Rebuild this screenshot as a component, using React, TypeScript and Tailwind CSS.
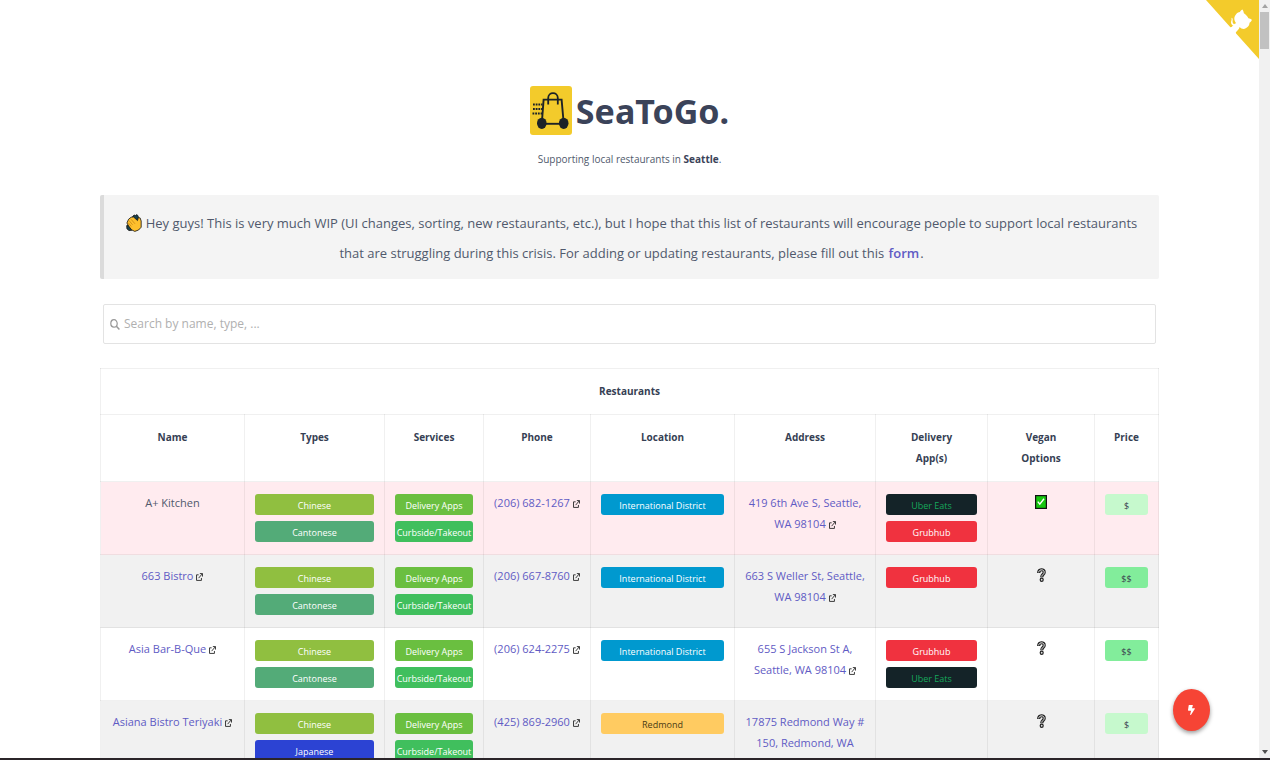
import React from "react";
import { FaBolt } from "react-icons/fa";

type Restaurant = {
  name: string;
  site?: boolean;
  types: string[];
  services: string[];
  phone: string;
  location: string;
  address: string;
  apps: string[];
  vegan: boolean | null;
  price: string;
  closed?: boolean;
};

const TAG_COLORS: Record<string, string> = {
  Chinese: "bg-[#90bf40] text-white",
  Cantonese: "bg-[#53ab78] text-white",
  Japanese: "bg-[#2c43d3] text-white",
  "Delivery Apps": "bg-[#6abf40] text-white",
  "Curbside/Takeout": "bg-[#40bf5d] text-white",
  "International District": "bg-[#0099cf] text-white",
  Redmond: "bg-[#ffcb61] text-[#4a3b14]",
  "Uber Eats": "bg-[#142328] text-[#16a75c]",
  Grubhub: "bg-[#f0323f] text-white",
  $: "bg-[#c6f9cd] text-[#3b4351]",
  $$: "bg-[#82ed9b] text-[#3b4351]",
};

const SERVICES = ["Delivery Apps", "Curbside/Takeout"];

const RESTAURANTS: Restaurant[] = [
  {
    name: "A+ Kitchen",
    types: ["Chinese", "Cantonese"],
    services: SERVICES,
    phone: "(206) 682-1267",
    location: "International District",
    address: "419 6th Ave S, Seattle, WA 98104",
    apps: ["Uber Eats", "Grubhub"],
    vegan: true,
    price: "$",
    closed: true,
  },
  {
    name: "663 Bistro",
    site: true,
    types: ["Chinese", "Cantonese"],
    services: SERVICES,
    phone: "(206) 667-8760",
    location: "International District",
    address: "663 S Weller St, Seattle, WA 98104",
    apps: ["Grubhub"],
    vegan: null,
    price: "$$",
  },
  {
    name: "Asia Bar-B-Que",
    site: true,
    types: ["Chinese", "Cantonese"],
    services: SERVICES,
    phone: "(206) 624-2275",
    location: "International District",
    address: "655 S Jackson St A, Seattle, WA 98104",
    apps: ["Grubhub", "Uber Eats"],
    vegan: null,
    price: "$$",
  },
  {
    name: "Asiana Bistro Teriyaki",
    site: true,
    types: ["Chinese", "Japanese"],
    services: SERVICES,
    phone: "(425) 869-2960",
    location: "Redmond",
    address: "17875 Redmond Way # 150, Redmond, WA 98052",
    apps: [],
    vegan: null,
    price: "$",
  },
];

const COLUMNS = [
  { label: "Name", width: "w-[144px]" },
  { label: "Types", width: "w-[140px]" },
  { label: "Services", width: "w-[99px]" },
  { label: "Phone", width: "w-[107px]" },
  { label: "Location", width: "w-[144px]" },
  { label: "Address", width: "w-[141px]" },
  { label: "Delivery\nApp(s)", width: "w-[112px]" },
  { label: "Vegan\nOptions", width: "w-[107px]" },
  { label: "Price", width: "w-[64px]" },
];

const Logo = () => (
  <svg viewBox="0 0 42 49" className="h-[49px] w-[42px] shrink-0" fill="none" stroke="#1d2327">
    <rect width="42" height="49" rx="3" fill="#f3cb2b" stroke="none" />
    <path d="M11.9 36 13.6 13.6H31.6L33.6 36" strokeWidth="1.9" />
    <path d="M18.2 18.5V12c0-6.5 9.6-6.5 9.6 0v6.5" strokeWidth="1.8" />
    <path d="M12 37.8H34" strokeWidth="1.9" />
    <path d="M3 18.5H12.5M3 23H12.5M2.5 27.5H12" strokeWidth="2" strokeDasharray="1.8 .9" />
    <ellipse cx="11.8" cy="37.3" rx="4.8" ry="5.6" fill="#1d2327" stroke="none" />
    <ellipse cx="33.7" cy="37.3" rx="4.8" ry="5.6" fill="#1d2327" stroke="none" />
  </svg>
);

const GithubCorner = () => (
  <a href="#github" aria-label="View source on GitHub" className="absolute top-0 right-0">
    <svg viewBox="0 0 250 250" preserveAspectRatio="none" className="h-[59px] w-[53px]" fill="#fff">
      <path fill="#f3cb2b" d="M0,0 L115,115 L130,115 L142,142 L250,250 L250,0 Z" />
      <path d="M128.3,109.0 C113.8,99.7 119.0,89.6 119.0,89.6 C122.0,82.7 120.5,78.6 120.5,78.6 C119.2,72.0 123.4,76.3 123.4,76.3 C127.3,80.9 125.5,87.3 125.5,87.3 C122.9,97.6 130.6,101.9 134.4,103.2" />
      <path d="M115.0,115.0 C114.9,115.1 118.7,116.5 119.8,115.4 L133.7,101.6 C136.9,99.2 139.9,98.4 142.2,98.6 C133.8,88.0 127.5,74.4 143.8,58.0 C148.5,53.4 154.0,51.2 159.7,51.0 C160.3,49.4 163.2,43.6 171.4,40.1 C171.4,40.1 176.1,42.5 178.8,56.2 C183.1,58.6 187.2,61.8 190.9,65.4 C194.5,69.0 197.7,73.2 200.1,77.6 C213.8,80.2 216.3,84.9 216.3,84.9 C212.7,93.1 206.9,96.0 205.4,96.6 C205.1,102.4 203.0,107.8 198.3,112.5 C181.9,128.9 168.3,122.5 157.7,114.1 C157.9,116.9 156.7,120.9 152.7,124.9 L141.0,136.5 C139.8,137.7 141.6,141.9 141.8,141.8 Z" />
    </svg>
  </a>
);

const ClapIcon = () => (
  <svg viewBox="0 0 16 18" className="mr-1 inline-block h-[18px] w-4 align-[-4px]" strokeLinejoin="round">
    <path d="M6.5 3 8 1l1.5.5L11 .6l1.2 1.6.4 2.6-2 2zM3 10.5.7 11.6l.2 3.2L3 16.6l3-.4z" fill="#17414d" stroke="#111" strokeWidth=".8" />
    <path d="M.9 9 2.6 5.2 5.2 3.2 7.6 3l3.9 3.6.8-3 1.8.3L15.2 7v6.2L12.6 16l-3.8 1.4-3.2-1.6L2.6 12z" fill="#fdbf2d" stroke="#111" strokeWidth=".8" />
    <path d="m3 6.6 3.6 4.2M5 5.2l4 4.6M2.2 8.8l3.2 3.6" stroke="#b8740f" strokeWidth=".6" fill="none" />
  </svg>
);

const SearchIcon = () => (
  <svg viewBox="0 0 10 11" className="h-[11px] w-[10px] shrink-0" fill="none" stroke="#999" aria-hidden="true">
    <ellipse cx="4" cy="4.4" rx="3.2" ry="3.7" strokeWidth="1.2" />
    <path d="m6.4 7.2 3 3.2" strokeWidth="1.5" />
  </svg>
);

const ExternalIcon = () => (
  <svg viewBox="0 0 8 9" className="ml-[3px] inline-block h-2 w-[7px] align-[-1px]" fill="none" stroke="#222">
    <path d="M3 2H.6v6.4h5.6V5.6" />
    <path d="M4.4.6h3v3.4M7.2.8 3 5.8" />
  </svg>
);

const VeganIcon = ({ value }: { value: boolean | null }) =>
  value ? (
    <svg viewBox="0 0 12 14" className="mx-auto h-[14px] w-3" role="img" aria-label="Yes">
      <rect x=".6" y=".6" width="10.8" height="12.8" fill="#17c60f" stroke="#111" strokeWidth="1.2" />
      <path d="m2.8 6.6 2 2.6 4.2-5.4" fill="none" stroke="#fff" strokeWidth="1.4" />
    </svg>
  ) : (
    <svg viewBox="0 0 9 14" className="mx-auto h-[14px] w-[9px]" role="img" aria-label="Unknown" fill="none">
      <path d="M1.7 5C1.6.8 7.2.8 7.2 4.2 7.2 6.6 4.8 6.4 4.8 9.2" stroke="#222" strokeWidth="3.2" />
      <path d="M1.7 4.4C1.8 1 7.2 1 7.2 4.2 7.2 6.6 4.8 6.4 4.8 8.6" stroke="#eee" strokeWidth="1" />
      <ellipse cx="4.7" cy="11.8" rx="1.5" ry="1.6" fill="#ddd" stroke="#222" strokeWidth="1.2" />
    </svg>
  );

const Tags = ({ items }: { items: string[] }) => (
  <div className="flex flex-col gap-[6px]">
    {items.map((item) => (
      <span
        key={item}
        className={`block h-[21px] rounded-[3px] text-[9px] leading-[23px] whitespace-nowrap ${TAG_COLORS[item]}`}
      >
        {item}
      </span>
    ))}
  </div>
);

const TextLink = ({ href, children }: { href: string; children: React.ReactNode }) => (
  <>
    <a href={href} className="font-medium text-[#5f5bc4] hover:underline">
      {children}
    </a>
    <ExternalIcon />
  </>
);

const rowColor = (item: Restaurant, index: number) => {
  if (item.closed) return "bg-[#ffebef]";
  return index % 2 ? "bg-[#f1f1f1]" : "bg-white";
};

const RestaurantTable = () => (
  <table className="mt-6 w-full table-fixed border-collapse text-center text-[11px] leading-[21px]">
    <colgroup>
      {COLUMNS.map((col) => (
        <col key={col.label} className={col.width} />
      ))}
    </colgroup>
    <thead className="text-[10px] text-[#363f54]">
      <tr>
        <th colSpan={COLUMNS.length} className="border border-black/6 py-3 font-bold">
          Restaurants
        </th>
      </tr>
      <tr>
        {COLUMNS.map((col) => (
          <th key={col.label} className="border border-black/6 px-3 py-3 align-top font-bold whitespace-pre-line">
            {col.label}
          </th>
        ))}
      </tr>
    </thead>
    <tbody>
      {RESTAURANTS.map((item, index) => (
        <tr key={item.name} className={`${rowColor(item, index)} *:border *:border-black/6 *:px-[10px] *:pb-3 *:align-top`}>
          <td className="pt-[10px] whitespace-nowrap">
            {item.site ? <TextLink href="#site">{item.name}</TextLink> : item.name}
          </td>
          <td className="pt-3"><Tags items={item.types} /></td>
          <td className="pt-3"><Tags items={item.services} /></td>
          <td className="pt-[10px] whitespace-nowrap">
            <TextLink href="#phone">{item.phone}</TextLink>
          </td>
          <td className="pt-3"><Tags items={[item.location]} /></td>
          <td className="pt-[10px]"><TextLink href="#map">{item.address}</TextLink></td>
          <td className="pt-3"><Tags items={item.apps} /></td>
          <td className="pt-[13px]"><VeganIcon value={item.vegan} /></td>
          <td className="pt-3"><Tags items={[item.price]} /></td>
        </tr>
      ))}
    </tbody>
  </table>
);

const Scrollbar = () => (
  <div className="flex w-[11px] shrink-0 flex-col items-center justify-between bg-[#f1f1f1]" aria-hidden="true">
    <div className="flex flex-col items-center gap-1 pt-1">
      <svg viewBox="0 0 6 4" className="h-1 w-[6px]" fill="#a3a3a3">
        <path d="M0 4 3 0l3 4z" />
      </svg>
      <div className="h-[37px] w-[9px] bg-[#c1c1c1]" />
    </div>
    <svg viewBox="0 0 6 4" className="mb-1 h-1 w-[6px]" fill="#505050">
      <path d="M0 0h6L3 4z" />
    </svg>
  </div>
);

const App = () => {
  return (
    <div className="flex h-screen flex-col overflow-hidden bg-white font-['Open_Sans','Noto_Sans',sans-serif] text-[#50596c]">
      <div className="flex min-h-0 flex-1">
        <main className="relative min-w-0 flex-1 overflow-hidden">
          <GithubCorner />
          <div className="px-25 pt-[86px]">
            <header className="text-center">
              <div className="flex items-center justify-center gap-1">
                <Logo />
                <h1 className="font-['Noto_Sans',sans-serif] text-[34px] leading-[48px] font-bold text-[#3b4359]">SeaToGo.</h1>
              </div>
              <p className="mt-[14px] text-[10px] leading-[21px]">
                Supporting local restaurants in <strong className="text-[#3b4359]">Seattle</strong>.
              </p>
            </header>

            <section className="mt-[25px] rounded-[2px] border-l-4 border-[#dbdbdb] bg-[#f4f4f4] px-4 pt-[13px] pb-[11px] text-center text-[13px] leading-[30px]">
              <ClapIcon />
              Hey guys! This is very much WIP (UI changes, sorting, new restaurants, etc.), but I hope that this list of
              restaurants will encourage people to support local restaurants that are struggling during this crisis. For
              adding or updating restaurants, please fill out this{" "}
              <a href="#form" className="mx-px font-semibold text-[#5f5bc4]">form</a>.
            </section>

            <label className="mx-[3px] mt-[25px] flex h-10 items-center gap-1 rounded-[2px] border border-[#e3e3e3] px-[6px]">
              <SearchIcon />
              <input
                type="text"
                aria-label="Search restaurants"
                placeholder="Search by name, type, ..."
                className="min-w-0 flex-1 text-[12px] outline-none placeholder:text-[#b0b0b0]"
              />
            </label>

            <RestaurantTable />
          </div>

          <button
            type="button"
            aria-label="Quick actions"
            className="absolute right-[49px] bottom-[27px] flex h-[42px] w-[37px] items-center justify-center rounded-[50%] bg-[#f64435] text-white shadow-[0_2px_4px_rgba(0,0,0,0.4)]"
          >
            <FaBolt className="h-[10px] w-[7px]" preserveAspectRatio="none" />
          </button>
        </main>
        <Scrollbar />
      </div>
      <div className="h-[2px] shrink-0 bg-[#2b2529]" />
    </div>
  );
};

export default App;
